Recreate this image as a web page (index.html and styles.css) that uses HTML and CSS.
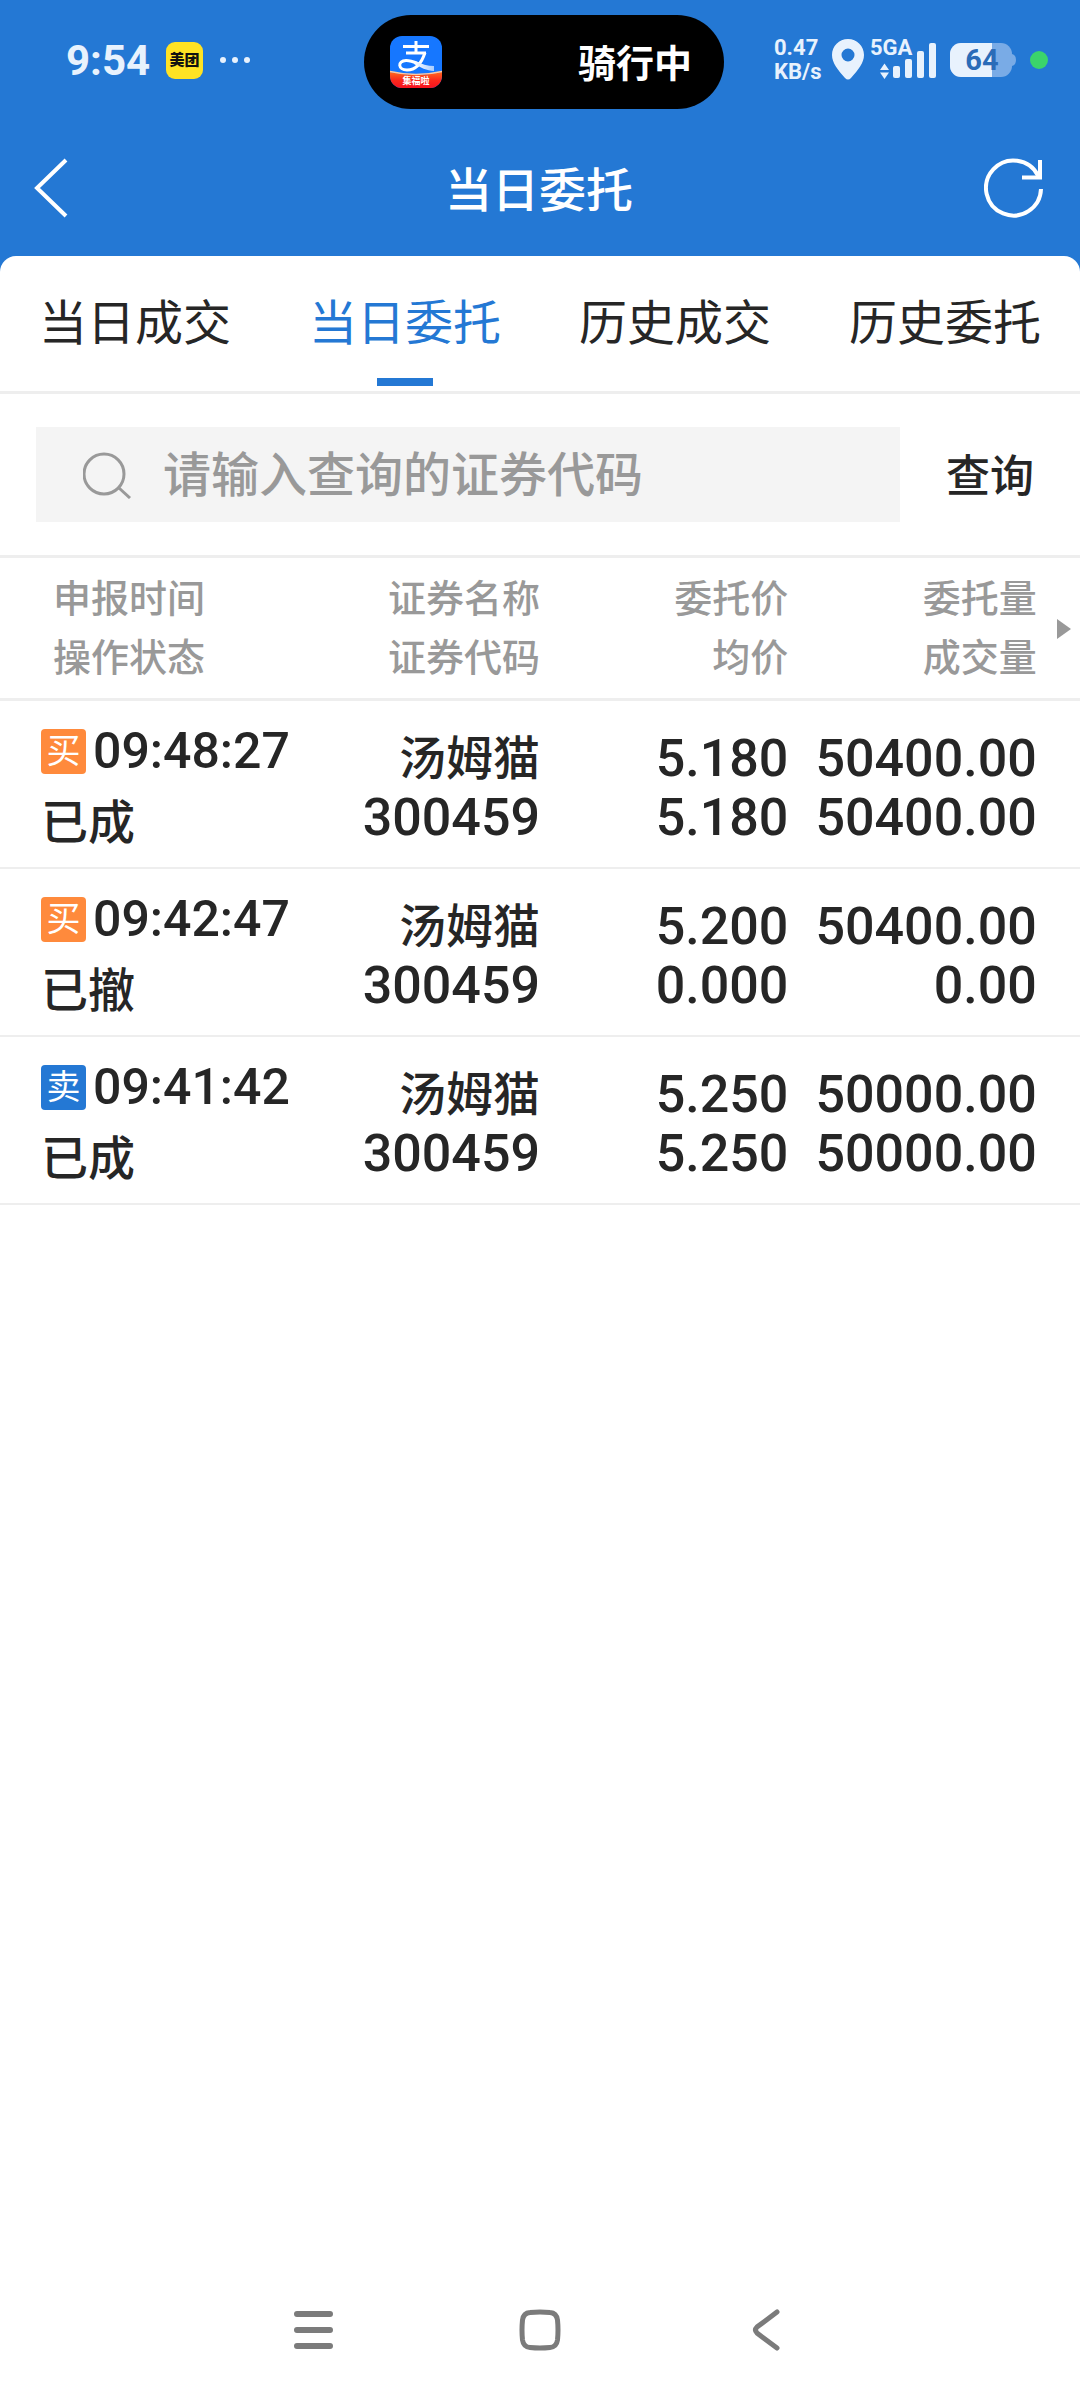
FILE: index.html
```html
<!DOCTYPE html>
<html lang="zh-CN">
<head>
  <meta charset="utf-8">
  <meta name="viewport" content="width=device-width, initial-scale=1">
  <title>当日委托</title>
  <link rel="stylesheet" href="styles.css">
</head>
<body>
  <div class="app">
    <div class="status">
      <div class="status-left">
        <span class="clock">9:54</span>
        <span class="chip">美团</span>
        <svg class="dots" width="32" height="8" viewBox="0 0 32 8" fill="#e8f2fd" aria-hidden="true">
          <circle cx="4" cy="4" r="3"/><circle cx="16" cy="4" r="3"/><circle cx="28" cy="4" r="3"/>
        </svg>
      </div>
      <div class="island">
        <svg width="52" height="52" viewBox="0 0 52 52" aria-hidden="true">
          <defs>
            <clipPath id="tile"><rect width="52" height="52" rx="12"/></clipPath>
            <linearGradient id="ribbon" x1="0" y1="0" x2="0" y2="1">
              <stop offset="0" stop-color="#ff6a1f"/><stop offset="0.5" stop-color="#fb2a1c"/><stop offset="1" stop-color="#f5121f"/>
            </linearGradient>
            <linearGradient id="tail" x1="0" y1="0" x2="1" y2="0">
              <stop offset="0" stop-color="#fff"/><stop offset="1" stop-color="#a9cdff"/>
            </linearGradient>
          </defs>
          <g clip-path="url(#tile)">
            <rect width="52" height="52" fill="#1677ff"/>
            <path d="M0 36Q26 42 52 36V52H0Z" fill="url(#ribbon)"/>
            <path d="M0 35.500Q26 41.500 52 35.500" fill="none" stroke="#ffc9a3" stroke-width="1.500"/>
            <path d="M13 10.500H39M26 5V17M16 17H36" fill="none" stroke="#fff" stroke-width="3"/>
            <path d="M35 16.500C32 26 26 34 17 34C8 34 7 25 16 24.500C20 24.300 24 26 29 28" fill="none" stroke="#fff" stroke-width="3"/>
            <path d="M25 25C31 28 38 30 44 30V35C37 35 30 31 24 28Z" fill="url(#tail)"/>
          </g>
          <text class="ribbon-text" x="26" y="48" text-anchor="middle">集福啦</text>
        </svg>
        <span class="island-text">骑行中</span>
      </div>
      <div class="status-right">
        <span class="speed">0.47<br>KB/s</span>
        <svg width="32" height="42" viewBox="0 0 32 42" aria-hidden="true">
          <path fill="#e8f2fd" fill-rule="evenodd" d="M16 0C7 0 0 7 0 16C0 24 6 31 13 39Q16 42 19 39C26 31 32 24 32 16C32 7 25 0 16 0ZM16 9.500A6.500 6.500 0 1 1 16 22.500A6.500 6.500 0 1 1 16 9.500Z"/>
        </svg>
        <svg class="signal" width="68" height="50" viewBox="0 -4 68 50" fill="#e8f2fd">
          <text class="net" x="0" y="16">5GA</text>
          <path d="M10 31L14.500 24.500L19 31ZM10 33.500H19L14.500 40Z"/>
          <rect x="23" y="27" width="7" height="12" rx="2"/>
          <rect x="35" y="20" width="7" height="19" rx="2"/>
          <rect x="47" y="12" width="7" height="27" rx="2"/>
          <rect x="59" y="4" width="7" height="35" rx="2"/>
        </svg>
        <svg class="battery" width="66" height="34" viewBox="0 0 66 34">
          <defs><clipPath id="cell"><rect width="62" height="34" rx="11"/></clipPath></defs>
          <g clip-path="url(#cell)">
            <rect width="62" height="34" fill="#79abe6"/>
            <rect width="42" height="34" fill="#e8f2fd"/>
          </g>
          <path d="M62 11Q66 12 66 17Q66 22 62 23Z" fill="#79abe6"/>
          <text class="level" x="32" y="27" text-anchor="middle">64</text>
        </svg>
        <span class="live"></span>
      </div>
    </div>

    <header class="bar">
      <button class="icon-btn" type="button" aria-label="返回">
        <svg width="34" height="60" viewBox="0 0 34 60" fill="none" stroke="#fff" stroke-width="4"><path d="M32 2L3 30L32 58"/></svg>
      </button>
      <h1 class="title">当日委托</h1>
      <button class="icon-btn" type="button" aria-label="刷新">
        <svg width="60" height="60" viewBox="0 0 60 60" fill="none" stroke="#fff" stroke-width="4">
          <path d="M57 31A27.500 27.500 0 1 1 54 17.500L55 19"/><path d="M56 2V19.500H38"/>
        </svg>
      </button>
    </header>

    <main class="panel">
      <nav class="tabs">
        <a class="tab" href="#deals">当日成交</a>
        <a class="tab active" href="#orders" aria-current="page">当日委托</a>
        <a class="tab" href="#past-deals">历史成交</a>
        <a class="tab" href="#past-orders">历史委托</a>
      </nav>

      <form class="search">
        <label class="field">
          <svg width="48" height="48" viewBox="0 0 48 48" fill="none" stroke="#999" stroke-width="3"><circle cx="21" cy="23" r="20"/><path d="M36 37L47 47"/></svg>
          <input class="query" type="text" placeholder="请输入查询的证券代码" aria-label="请输入查询的证券代码">
        </label>
        <button class="submit" type="button">查询</button>
      </form>

      <table class="orders">
        <thead>
          <tr>
            <th class="c-time">申报时间<br>操作状态</th>
            <th class="c-num">证券名称<br>证券代码</th>
            <th class="c-num">委托价<br>均价</th>
            <th class="c-num">委托量<br>成交量</th>
            <th class="c-more"><svg width="14" height="20" viewBox="0 0 14 20" fill="#999"><path d="M0 0L14 10L0 20Z"/></svg></th>
          </tr>
        </thead>
        <tbody>
          <tr>
            <td class="c-time"><div class="time"><span class="side buy">买</span>09:48:27</div><div class="state">已成</div></td>
            <td><div class="name">汤姆猫</div>300459</td>
            <td>5.180<br>5.180</td>
            <td>50400.00<br>50400.00</td>
            <td></td>
          </tr>
          <tr>
            <td class="c-time"><div class="time"><span class="side buy">买</span>09:42:47</div><div class="state">已撤</div></td>
            <td><div class="name">汤姆猫</div>300459</td>
            <td>5.200<br>0.000</td>
            <td>50400.00<br>0.00</td>
            <td></td>
          </tr>
          <tr>
            <td class="c-time"><div class="time"><span class="side sell">卖</span>09:41:42</div><div class="state">已成</div></td>
            <td><div class="name">汤姆猫</div>300459</td>
            <td>5.250<br>5.250</td>
            <td>50000.00<br>50000.00</td>
            <td></td>
          </tr>
        </tbody>
      </table>
    </main>

    <div class="system-nav">
      <button class="key" type="button" aria-label="菜单">
        <svg width="42" height="42" viewBox="0 0 42 42" stroke="#7b7b7b" stroke-width="6" stroke-linecap="round"><path d="M4 5H37M4 21H37M4 37H37"/></svg>
      </button>
      <button class="key" type="button" aria-label="主页">
        <svg width="42" height="42" viewBox="0 0 42 42" fill="none" stroke="#7b7b7b" stroke-width="5"><path d="M11 3.500Q21 2.500 31 3.500Q37.500 4 38.500 11Q39.500 21 38.500 31Q37.500 38 31 38.500Q21 39.500 11 38.500Q4.500 38 3.500 31Q2.500 21 3.500 11Q4.500 4 11 3.500Z"/></svg>
      </button>
      <button class="key" type="button" aria-label="返回上一页">
        <svg width="42" height="42" viewBox="0 0 42 42" fill="none" stroke="#7b7b7b" stroke-width="5" stroke-linecap="round"><path d="M32 3L12 18Q9 21 12 24L32 39"/></svg>
      </button>
    </div>
  </div>
</body>
</html>
```
FILE: styles.css
```css
* {
  box-sizing: border-box;
}

body {
  margin: 0;
  font-family: Roboto, "Noto Sans CJK SC", sans-serif;
  color: #262626;
  background: #fff;
}

button,
input {
  padding: 0;
  border: 0;
  background: none;
  color: inherit;
  font: inherit;
}

svg {
  display: block;
  flex: none;
}

.app {
  display: flex;
  flex-direction: column;
  min-height: 100vh;
  background: #2478d4;
}

/* System status bar */
.status {
  display: grid;
  grid-template-columns: 1fr 360px 1fr;
  align-items: center;
  height: 120px;
  padding-left: 8px;
  color: #e8f2fd;
}

.status-left,
.status-right {
  display: flex;
  align-items: center;
}

.status-left {
  padding-left: 58px;
}

.clock {
  width: 100px;
  font-size: 42px;
  font-weight: 700;
}

.chip {
  width: 37px;
  height: 37px;
  margin-right: 16px;
  border-radius: 9px;
  background: #ffe324;
  color: #111;
  font-size: 15px;
  font-weight: 900;
  line-height: 36px;
  text-align: center;
}

.island {
  display: flex;
  align-items: center;
  justify-content: space-between;
  height: 94px;
  margin-top: 4px;
  padding: 0 32px 0 26px;
  border-radius: 47px;
  background: #000;
}

.island-text {
  padding-bottom: 4px;
  color: #fff;
  font-size: 38px;
  font-weight: 700;
}

.ribbon-text {
  fill: #fff;
  font-size: 9px;
  font-weight: 700;
}

.status-right {
  justify-content: flex-end;
  padding-right: 32px;
}

.speed {
  width: 58px;
  font-size: 22px;
  font-weight: 700;
  line-height: 24px;
}

.signal {
  margin: 0 12px 0 6px;
}

.net {
  font-size: 22px;
  font-weight: 700;
}

.level {
  fill: #2a6cb8;
  font-size: 29px;
  font-weight: 700;
}

.live {
  width: 18px;
  height: 18px;
  margin-left: 14px;
  border-radius: 50%;
  background: #3bd46b;
}

/* Title bar */
.bar {
  display: flex;
  align-items: center;
  justify-content: space-between;
  height: 136px;
  padding: 0 36px 0 34px;
  color: #fff;
}

.icon-btn {
  display: flex;
  width: 60px;
}

.title {
  margin: 0;
  padding-bottom: 4px;
  font-size: 47px;
  font-weight: 500;
}

/* Content */
.panel {
  flex: 1;
  border-radius: 16px 16px 0 0;
  background: #fff;
}

.tabs {
  display: grid;
  grid-template-columns: repeat(4, 1fr);
  height: 138px;
  border-bottom: 3px solid #eee;
}

.tab {
  position: relative;
  color: inherit;
  font-size: 48px;
  line-height: 136px;
  text-align: center;
  text-decoration: none;
}

.tab.active {
  color: #2478d4;
}

.tab.active::after {
  content: "";
  position: absolute;
  bottom: 6px;
  left: 50%;
  width: 56px;
  height: 8px;
  margin-left: -28px;
  background: #2478d4;
}

.search {
  display: flex;
  align-items: center;
  height: 164px;
  padding-left: 36px;
  border-bottom: 3px solid #eee;
}

.field {
  display: flex;
  flex: 1;
  align-items: center;
  min-width: 0;
  height: 95px;
  padding-left: 47px;
  background: #f4f4f4;
}

.query {
  flex: 1;
  min-width: 0;
  height: 95px;
  margin-left: 32px;
  padding-top: 2px;
  font-size: 48px;
  font-weight: 500;
}

.query::placeholder {
  color: #999;
  opacity: 1;
}

.submit {
  flex: none;
  width: 180px;
  padding-bottom: 4px;
  font-size: 44px;
  font-weight: 500;
}

.orders {
  width: 100%;
  border-collapse: separate;
  border-spacing: 0;
  table-layout: fixed;
  text-align: right;
}

.orders th {
  height: 143px;
  padding: 2px 0 0;
  border-bottom: 3px solid #eee;
  color: #999;
  font-size: 38px;
  font-weight: 500;
  line-height: 59px;
}

.orders td {
  height: 168px;
  padding: 28px 0 0;
  border-bottom: 2px solid #eee;
  font-size: 52px;
  font-weight: 500;
  line-height: 59px;
  vertical-align: top;
  white-space: nowrap;
}

.orders .c-time {
  width: 27%;
  text-align: left;
}

.orders th.c-time {
  padding-left: 53px;
}

.orders td.c-time {
  padding: 15px 0 0 41px;
  line-height: 71px;
}

.c-num {
  width: 23%;
}

.orders .c-more {
  width: 4%;
  padding-left: 20px;
}

.name,
.state {
  font-size: 47px;
}

.time {
  display: flex;
  gap: 7px;
  align-items: center;
  font-size: 50px;
}

.side {
  flex: none;
  width: 45px;
  height: 45px;
  border-radius: 4px;
  color: #fff;
  font-size: 34px;
  font-weight: 400;
  line-height: 45px;
  text-align: center;
}

.buy {
  background: #ff8a3c;
}

.sell {
  background: #2478d4;
}

/* System navigation keys */
.system-nav {
  display: flex;
  justify-content: center;
  height: 140px;
  background: #fff;
}

.key {
  display: flex;
  align-items: center;
  justify-content: center;
  width: 226px;
}
```
